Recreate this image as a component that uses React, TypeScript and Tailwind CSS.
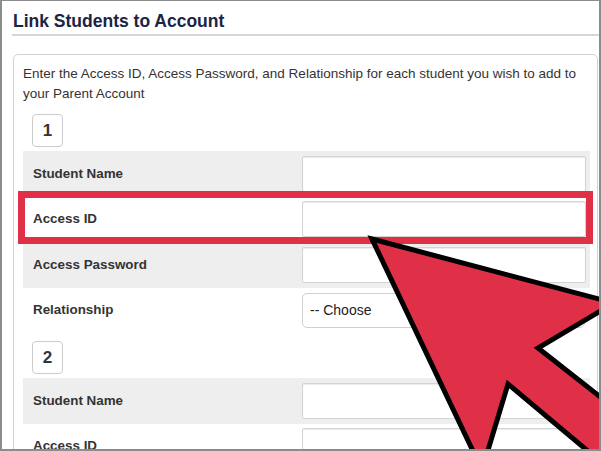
import React from "react";

const font = { fontFamily: '"Liberation Sans", Arial, Helvetica, sans-serif' };

function Row({ label, gray, kind }: { label: string; gray?: boolean; kind?: "select" }) {
  return (
    <div className={`flex items-center h-[45.5px] pl-[10px] pr-[4px] ${gray ? "bg-[#eeeeee]" : "bg-white"}`}>
      <div className="w-[269px] text-[13.4px] font-bold text-[#333333]">{label}</div>
      {kind === "select" ? (
        <div className="w-[283px] h-[35px] rounded-[5px] border border-[#cfcfcf] bg-white flex items-center pl-[7px] text-[14px] text-[#222222]">
          -- Choose
        </div>
      ) : (
        <div className="w-[284px] h-[36px] rounded-[2px] border border-[#d3d3d3] bg-white shadow-[inset_0_1px_1px_rgba(0,0,0,0.08)]" />
      )}
    </div>
  );
}

function Badge({ n }: { n: string }) {
  return (
    <div className="ml-[9px] w-[31px] h-[33px] rounded-[4px] border border-[#cccccc] bg-white flex items-center justify-center text-[17px] font-bold text-[#333333]">
      {n}
    </div>
  );
}

export default function App() {
  return (
    <div
      style={font}
      className="relative w-[601px] h-[451px] overflow-hidden bg-white border-l-2 border-r-2 border-t border-b-2 border-[#8c8c8c]"
    >
      <div className="pl-[11px] pt-[9px] h-[33px]">
        <div className="text-[17.5px] leading-[22px] font-bold text-[#1b2444]">Link Students to Account</div>
      </div>
      <div className="ml-[10px] h-[2px] bg-[#d6d6d6]" />
      <div className="ml-[11px] mr-[1px] mt-[18px] border border-[#d2d2d2] rounded-[5px] pl-[9px] pr-[7px] pt-[9px] pb-[20px]">
        <div className="text-[13.5px] leading-[20px] text-[#333333]">
          Enter the Access ID, Access Password, and Relationship for each student you wish to add to your Parent Account
        </div>
        <div className="mt-[10px]">
          <Badge n="1" />
        </div>
        <div className="mt-[4px]">
          <Row label="Student Name" gray />
          <Row label="Access ID" />
          <Row label="Access Password" gray />
          <Row label="Relationship" kind="select" />
        </div>
        <div className="mt-[8px]">
          <Badge n="2" />
        </div>
        <div className="mt-[4px]">
          <Row label="Student Name" gray />
          <Row label="Access ID" />
          <Row label="Access Password" gray />
        </div>
      </div>
      <svg
        className="absolute left-[-2px] top-[-1px] pointer-events-none"
        width="601"
        height="451"
        viewBox="0 0 601 451"
      >
        <rect x="21.5" y="194.5" width="568" height="46" fill="none" stroke="#df3047" strokeWidth="7" />
        <polygon
          points="372,239 614,303 538,348 645,432 620,478 508,384 482,470"
          fill="#df3047"
          stroke="#000000"
          strokeWidth="5"
          strokeLinejoin="miter"
        />
      </svg>
    </div>
  );
}
